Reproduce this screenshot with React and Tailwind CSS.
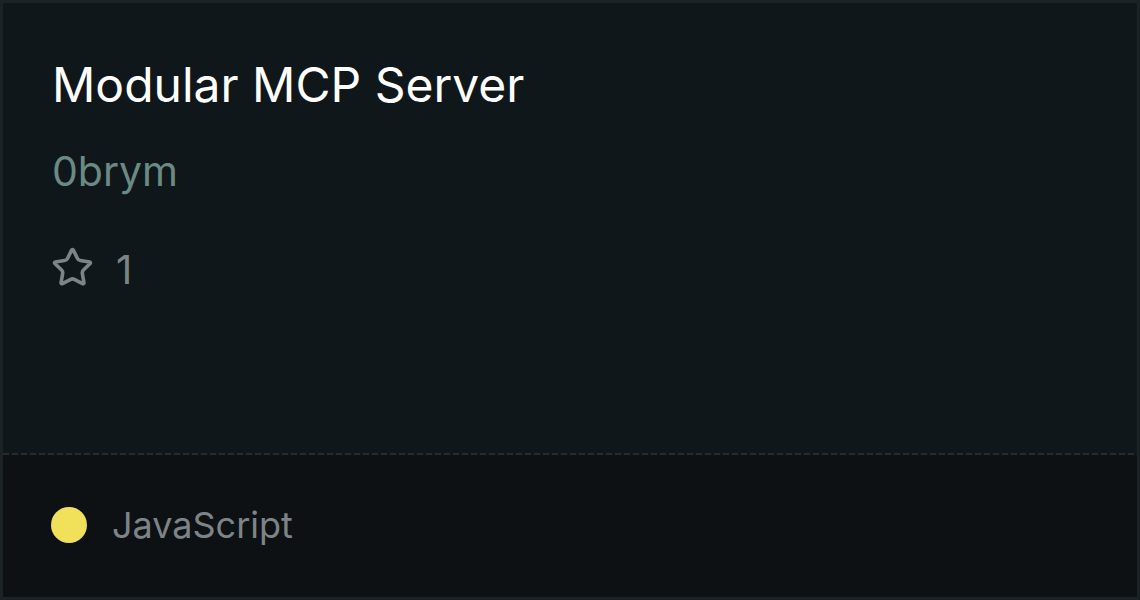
import React from 'react'
import { Star } from 'lucide-react'

export default function App() {
  return (
    <div
      className="w-[1140px] h-[600px] flex flex-col border-[3px] border-[#1c2326] bg-[#10171a]"
      style={{ fontFamily: 'Inter, "Noto Sans", sans-serif' }}
    >
      <div className="flex-1 px-[49px] pt-[58px]">
        <h1 className="text-[48px] leading-none text-white">Modular MCP Server</h1>
        <p className="mt-[42px] text-[41px] leading-none text-[#6b8a84]">0brym</p>
        <div className="mt-[54px] flex items-start gap-[22px] text-[#7d8487]">
          <Star size={43} strokeWidth={2} className="-ml-[1px]" />
          <span className="mt-[4px] text-[40px] leading-none">1</span>
        </div>
      </div>
      <div className="h-[2px] bg-[repeating-linear-gradient(90deg,#252b2e_0px,#252b2e_6px,transparent_6px,transparent_9px)]" />
      <div className="h-[142px] bg-[#0d1114] flex items-start gap-[25px] px-[48px] pt-[52px]">
        <span className="w-9 h-9 rounded-full bg-[#f1e05a]" />
        <span className="text-[36px] leading-none text-[#7d8487]">JavaScript</span>
      </div>
    </div>
  )
}
